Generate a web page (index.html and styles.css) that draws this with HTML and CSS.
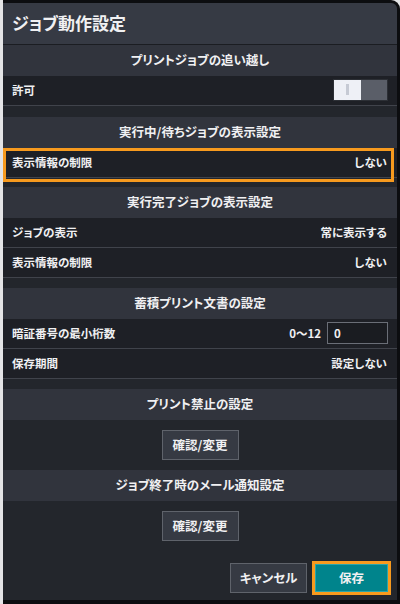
FILE: index.html
```html
<!DOCTYPE html>
<html lang="ja">
<head>
  <meta charset="UTF-8">
  <meta name="viewport" content="width=device-width, initial-scale=1">
  <title>ジョブ動作設定</title>
  <link rel="stylesheet" href="styles.css">
</head>
<body>
  <div class="dialog">
    <h1 class="dialog-title">ジョブ動作設定</h1>

    <!-- プリントジョブの追い越し -->
    <section class="group group-first">
      <h2 class="group-head">プリントジョブの追い越し</h2>
      <div class="row">
        <span>許可</span>
        <span class="toggle"><span class="toggle-knob"></span></span>
      </div>
    </section>

    <!-- 実行中/待ちジョブ -->
    <section class="group group-tight">
      <h2 class="group-head">実行中/待ちジョブの表示設定</h2>
      <div class="row marked">
        <span>表示情報の制限</span>
        <span>しない</span>
      </div>
    </section>

    <!-- 実行完了ジョブ -->
    <section class="group">
      <h2 class="group-head">実行完了ジョブの表示設定</h2>
      <div class="row">
        <span>ジョブの表示</span>
        <span>常に表示する</span>
      </div>
      <div class="row">
        <span>表示情報の制限</span>
        <span>しない</span>
      </div>
    </section>

    <!-- 蓄積プリント文書 -->
    <section class="group">
      <h2 class="group-head">蓄積プリント文書の設定</h2>
      <div class="row">
        <span>暗証番号の最小桁数</span>
        <span class="field">
          <span>0〜12</span>
          <input type="text" class="num-input" value="0">
        </span>
      </div>
      <div class="row">
        <span>保存期間</span>
        <span>設定しない</span>
      </div>
    </section>

    <section class="group-btn">
      <h2 class="group-head">プリント禁止の設定</h2>
      <div class="btn-area"><button class="btn">確認/変更</button></div>
    </section>

    <section class="group-btn">
      <h2 class="group-head">ジョブ終了時のメール通知設定</h2>
      <div class="btn-area"><button class="btn">確認/変更</button></div>
    </section>

    <div class="footer">
      <button class="btn btn-foot">キャンセル</button>
      <button class="btn btn-save">保存</button>
    </div>
  </div>
</body>
</html>
```

FILE: styles.css
```css
* { box-sizing: border-box; }

body {
  margin: 0;
  padding: 0 0 0 3px;
  background: #e4e4e6;
  font-family: "Noto Sans CJK JP", "Noto Sans", sans-serif;
  font-feature-settings: "palt";
  font-weight: bold;
  color: #f0f0f2;
  height: 604px;
  overflow: hidden;
}

.dialog {
  width: 397px;
  height: 604px;
  background: #23262c;
  border-top: 3px solid #0c0d10;
  border-right: 3px solid #0c0d10;
  border-bottom: 4px solid #0c0d10;
  border-top-right-radius: 9px;
  overflow: hidden;
}

.dialog-title {
  margin: 0;
  height: 42px;
  padding: 0 9px 2px;
  display: flex;
  align-items: center;
  font-size: 17px;
  font-weight: bold;
  background: #363a44;
  border-bottom: 1px solid #1b1d22;
}

.group { padding-bottom: 10px; }
.group-first { padding-bottom: 11px; }
.group-tight { padding-bottom: 9px; }

.group-head {
  margin: 0;
  height: 31px;
  padding-bottom: 2px;
  display: flex;
  align-items: center;
  justify-content: center;
  font-size: 12.5px;
  font-weight: bold;
  background: #31343d;
}

.row {
  height: 30px;
  padding: 0 10px 2px 9px;
  display: flex;
  align-items: center;
  justify-content: space-between;
  font-size: 11.5px;
  background: #1e2026;
  border-bottom: 1px solid #40434b;
  position: relative;
}

.row.marked::after {
  content: "";
  position: absolute;
  left: 0; right: 3px;
  top: 0; bottom: -5px;
  border: 3px solid #f79a1e;
}

.toggle {
  display: flex;
  width: 55px;
  height: 22px;
  margin-right: -1px;
  background: #5a5e68;
  border: 1px solid #2c2f35;
}

.toggle-knob {
  width: 27px;
  height: 100%;
  background: #eef0f6;
  display: flex;
  justify-content: center;
  align-items: center;
}

.toggle-knob::before {
  content: "";
  width: 3px;
  height: 11px;
  background: #c6cad4;
}

.field {
  display: flex;
  align-items: center;
  gap: 6px;
}

.num-input {
  width: 61px;
  height: 22px;
  padding: 0 6px;
  margin-right: -1px;
  background: #1a1c21;
  border: 1px solid #6a6e77;
  color: #f0f0f2;
  font-family: inherit;
  font-size: 11.5px;
  font-weight: bold;
  outline: none;
}

.btn-area {
  display: flex;
  justify-content: center;
  padding: 10px 0;
}

.btn {
  height: 30px;
  width: 77px;
  padding: 0 0 2px;
  background: #363a43;
  border: 1px solid #5f636b;
  color: #f0f0f2;
  font-family: inherit;
  font-feature-settings: "palt";
  font-size: 12.5px;
  font-weight: bold;
  cursor: pointer;
}

.footer {
  display: flex;
  justify-content: flex-end;
  align-items: center;
  gap: 5px;
  padding: 10px 6px 0 0;
}

.btn-save {
  width: 79px;
  height: 34px;
  background: #00848c;
  border: 3px solid #f79a1e;
  box-shadow: inset 0 0 0 1px #2aa5ab;
}
```
